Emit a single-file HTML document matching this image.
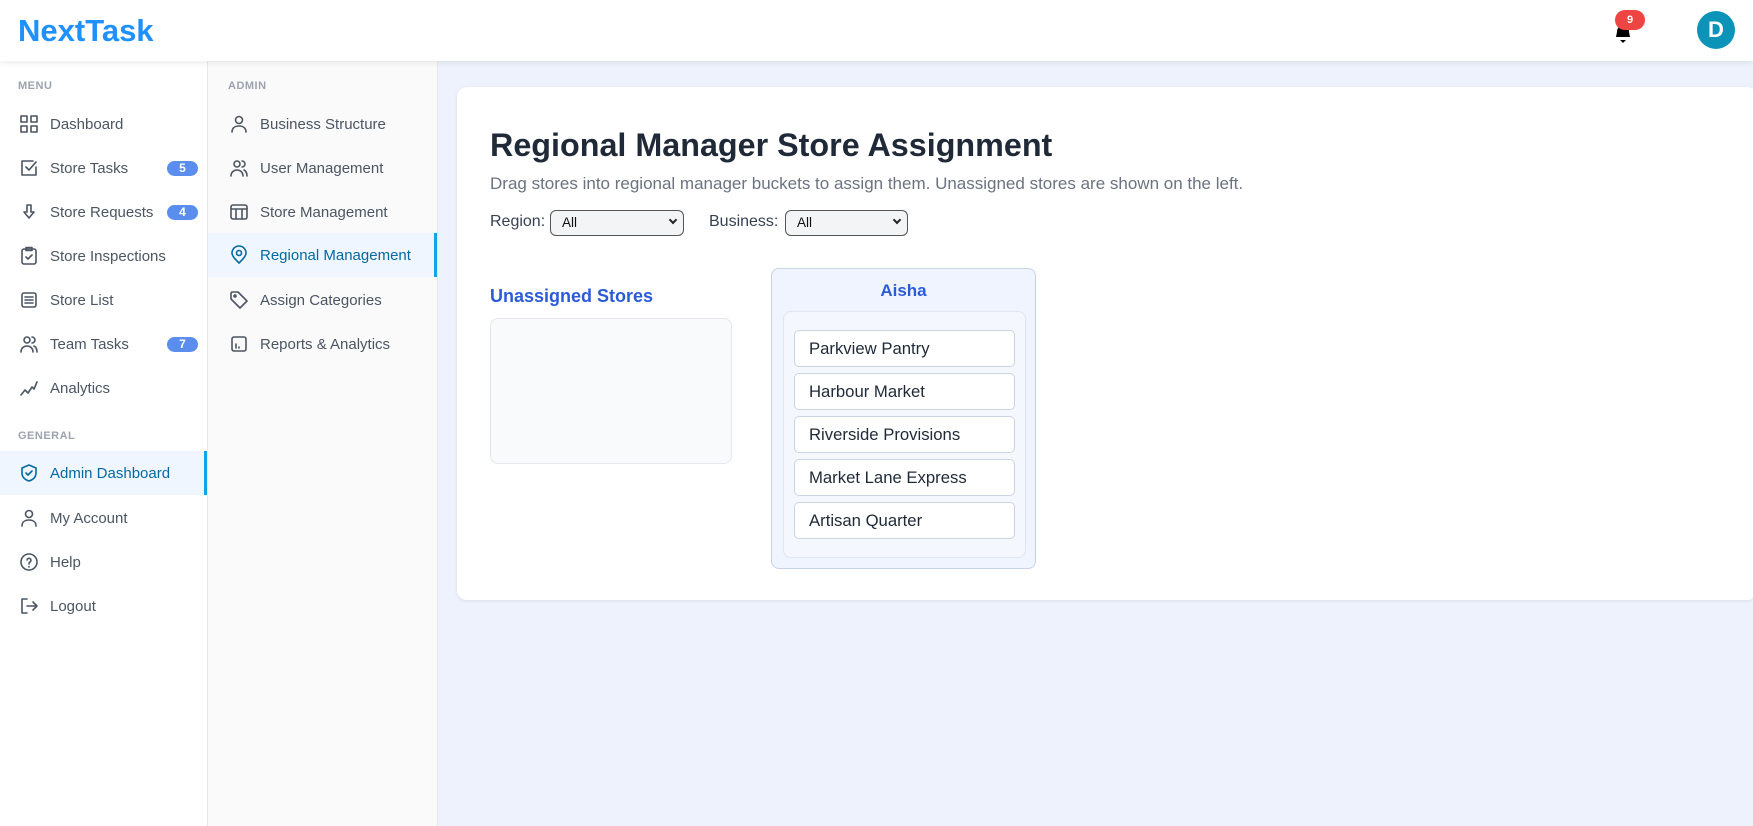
<!DOCTYPE html>
<html><head><style>
*{box-sizing:border-box;margin:0;padding:0}
body{width:1753px;height:826px;overflow:hidden;font-family:"Liberation Sans",sans-serif;background:#eef2fc;position:relative}
.hdr{position:absolute;left:0;top:0;width:1753px;height:61px;background:#fff;box-shadow:0 2px 6px rgba(0,0,0,.08);z-index:5}
.logo{position:absolute;left:18px;top:13px;font-size:31px;font-weight:bold;color:#1e90ff}
.sb1{position:absolute;left:0;top:61px;width:208px;height:765px;background:#fff;border-right:1px solid #e5e7eb}
.sb2{position:absolute;left:208px;top:61px;width:230px;height:765px;background:#fafafa;border-right:1px solid #e5e7eb}
.lbl{position:absolute;font-size:11px;font-weight:bold;color:#9ca3af;letter-spacing:.5px}
.it{position:absolute;left:0;width:100%;height:44px;font-size:15px;color:#4b5563;display:flex;align-items:center}
.it svg{position:absolute;left:19px;width:20px;height:20px;fill:none;stroke:#4b5563;stroke-width:1.6;stroke-linecap:round;stroke-linejoin:round}
.it span{position:absolute;left:50px}
.sb2 .it svg{left:21px}.sb2 .it span{left:52px}
.act{background:#eff6ff;color:#0369a1;border-right:3px solid #0ea5e9}
.act svg{stroke:#0369a1}
.bd{position:absolute;left:167px;width:31px;height:15px;border-radius:8px;background:#5b8def;color:#fff;font-size:12px;font-weight:bold;text-align:center;line-height:15px}
.card{position:absolute;left:457px;top:87px;width:1300px;height:513px;background:#fff;border-radius:10px;box-shadow:0 1px 4px rgba(0,0,0,.08)}
h1{position:absolute;left:490px;top:127px;font-size:32.3px;color:#1f2937;font-weight:bold}
.sub{position:absolute;left:490px;top:174px;font-size:17px;color:#6b7280}
.f{position:absolute;top:213px;font-size:16px;color:#374151}
.sel{position:absolute;top:210px;height:26px;border:1px solid #555;border-radius:6px;background:#f3f4f6;font-size:13.5px;padding-left:11px;line-height:24px;color:#111}
.sel i{position:absolute;right:7px;top:6px;width:6px;height:6px;border-right:2px solid #222;border-bottom:2px solid #222;transform:rotate(45deg)}
.uh{position:absolute;left:490px;top:286px;font-size:18px;font-weight:bold;color:#2b5bd7}
.ub{position:absolute;left:490px;top:318px;width:242px;height:146px;background:#f8fafc;border:1px solid #e5e7eb;border-radius:8px}
.bk{position:absolute;left:771px;top:268px;width:265px;height:301px;background:#eff4fe;border:1px solid #c9d3e6;border-radius:8px}
.bk .n{position:absolute;width:100%;top:12px;text-align:center;font-size:17px;font-weight:bold;color:#2b5bd7}
.in{position:absolute;left:11px;top:42px;width:243px;height:247px;background:#f4f7fe;border:1px solid #dfe6f3;border-radius:8px}
.st{position:absolute;left:10px;width:221px;height:37px;background:#fff;border:1px solid #cbd5e1;border-radius:5px;font-size:16.7px;color:#1f2937;padding-left:14px;line-height:35px}
</style></head><body>
<div class="hdr"><div class="logo">NextTask</div>
<svg style="position:absolute;left:1613px;top:20px" width="20" height="24" viewBox="0 0 20 24"><path d="M3 17 L4 12 Q4 6 10 6 Q16 6 16 12 L17 17Z" fill="#000"/><path d="M7 20h6l-3 3z" fill="#000"/></svg>
<div style="position:absolute;left:1615px;top:10px;width:30px;height:20px;border-radius:10px;background:#ef4444;color:#fff;font-size:11px;font-weight:bold;text-align:center;line-height:20px">9</div>
<div style="position:absolute;left:1697px;top:11px;width:38px;height:38px;border-radius:50%;background:#0b93b8;color:#fff;font-size:22px;font-weight:bold;text-align:center;line-height:38px">D</div>
</div>
<div class="sb1">
<div class="lbl" style="left:18px;top:19px">MENU</div>
<div class="it" style="top:41px"><svg viewBox="0 0 20 20"><rect x="2" y="2" width="6" height="6"/><rect x="12" y="2" width="6" height="6"/><rect x="2" y="12" width="6" height="6"/><rect x="12" y="12" width="6" height="6"/></svg><span>Dashboard</span></div>
<div class="it" style="top:85px"><svg viewBox="0 0 20 20"><path d="M17 9v8H3V3h11"/><path d="M7 9l3 3 7-8"/></svg><span>Store Tasks</span><div class="bd" style="top:15px">5</div></div>
<div class="it" style="top:129px"><svg viewBox="0 0 20 20"><path d="M8 3h4v7h3l-5 6-5-6h3z"/></svg><span>Store Requests</span><div class="bd" style="top:15px">4</div></div>
<div class="it" style="top:173px"><svg viewBox="0 0 20 20"><rect x="3" y="3" width="14" height="15" rx="2"/><rect x="7" y="1.5" width="6" height="3"/><path d="M7 11l2 2 4-4"/></svg><span>Store Inspections</span></div>
<div class="it" style="top:217px"><svg viewBox="0 0 20 20"><rect x="3" y="3" width="14" height="14" rx="2"/><path d="M6 7h8M6 10h8M6 13h8"/></svg><span>Store List</span></div>
<div class="it" style="top:261px"><svg viewBox="0 0 20 20"><circle cx="8" cy="6" r="3"/><path d="M2 18c0-4 3-6 6-6s6 2 6 6M13 3a3 3 0 010 6M15 12c2 1 3 3 3 6"/></svg><span>Team Tasks</span><div class="bd" style="top:15px">7</div></div>
<div class="it" style="top:305px"><svg viewBox="0 0 20 20"><path d="M2 17l4-5 3 3 4-6 2 2 3-7"/></svg><span>Analytics</span></div>
<div class="lbl" style="left:18px;top:369px">GENERAL</div>
<div class="it act" style="top:390px"><svg viewBox="0 0 20 20"><path d="M10 2l7 3v5c0 4-3 7-7 8-4-1-7-4-7-8V5z"/><path d="M7 10l2 2 4-4"/></svg><span>Admin Dashboard</span></div>
<div class="it" style="top:435px"><svg viewBox="0 0 20 20"><circle cx="10" cy="6" r="3.5"/><path d="M3 18c0-4 3-6 7-6s7 2 7 6"/></svg><span>My Account</span></div>
<div class="it" style="top:479px"><svg viewBox="0 0 20 20"><circle cx="10" cy="10" r="8"/><path d="M8 8a2 2 0 113 2c-1 .5-1 1-1 2M10 14.5v.5"/></svg><span>Help</span></div>
<div class="it" style="top:523px"><svg viewBox="0 0 20 20"><path d="M8 3H3v14h5M8 10h10M14 6l4 4-4 4"/></svg><span>Logout</span></div>
</div>
<div class="sb2">
<div class="lbl" style="left:20px;top:19px">ADMIN</div>
<div class="it" style="top:41px"><svg viewBox="0 0 20 20"><circle cx="10" cy="6" r="3.5"/><path d="M3 18c0-4 3-6 7-6s7 2 7 6"/></svg><span>Business Structure</span></div>
<div class="it" style="top:85px"><svg viewBox="0 0 20 20"><circle cx="8" cy="6" r="3"/><path d="M2 18c0-4 3-6 6-6s6 2 6 6M13 3a3 3 0 010 6M15 12c2 1 3 3 3 6"/></svg><span>User Management</span></div>
<div class="it" style="top:129px"><svg viewBox="0 0 20 20"><rect x="2" y="3" width="16" height="14" rx="2"/><path d="M2 7h16M7 7v10M13 7v10"/></svg><span>Store Management</span></div>
<div class="it act" style="top:172px"><svg viewBox="0 0 20 20"><path d="M10 18c-4-4-7-7-7-10a7 7 0 0114 0c0 3-3 6-7 10z"/><circle cx="10" cy="8" r="2.5"/></svg><span>Regional Management</span></div>
<div class="it" style="top:217px"><svg viewBox="0 0 20 20"><path d="M2 3v6l9 9 7-7-9-9H3z"/><circle cx="6" cy="6" r="1"/></svg><span>Assign Categories</span></div>
<div class="it" style="top:261px"><svg viewBox="0 0 20 20"><rect x="3" y="3" width="14" height="14" rx="2"/><path d="M7 10v4M10 13v1"/></svg><span>Reports &amp; Analytics</span></div>
</div>
<div class="card"></div>
<h1>Regional Manager Store Assignment</h1>
<div class="sub">Drag stores into regional manager buckets to assign them. Unassigned stores are shown on the left.</div>
<div class="f" style="left:490px">Region:</div>
<div class="sel" style="left:550px;width:134px">All<i></i></div>
<div class="f" style="left:709px">Business:</div>
<div class="sel" style="left:785px;width:123px">All<i></i></div>
<div class="uh">Unassigned Stores</div>
<div class="ub"></div>
<div class="bk"><div class="n">Aisha</div><div class="in">
<div class="st" style="top:18px">Parkview Pantry</div>
<div class="st" style="top:61px">Harbour Market</div>
<div class="st" style="top:104px">Riverside Provisions</div>
<div class="st" style="top:147px">Market Lane Express</div>
<div class="st" style="top:190px">Artisan Quarter</div>
</div></div>
</body></html>
